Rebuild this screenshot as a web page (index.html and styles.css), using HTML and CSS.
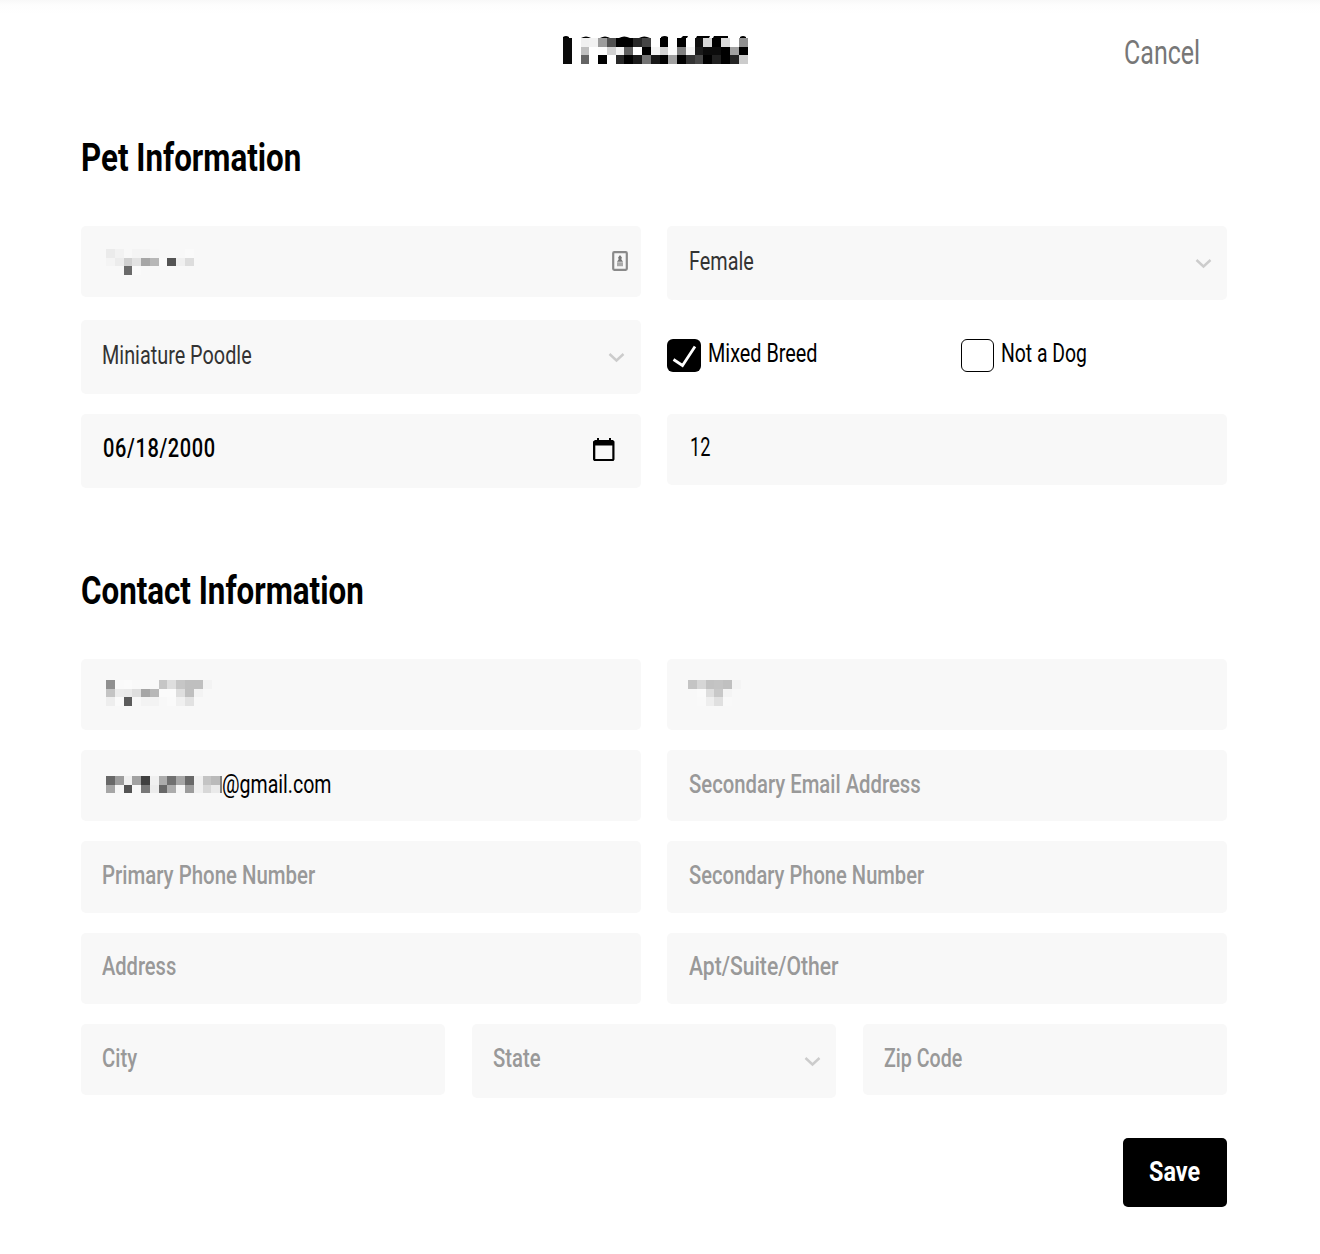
FILE: index.html
```html
<!DOCTYPE html>
<html lang="en">
<head>
  <meta charset="utf-8">
  <title>Edit Pet</title>
  <link rel="stylesheet" href="styles.css">
</head>
<body>

<header class="top">
  <svg class="mask" data-mask="id" width="186" height="28">
    <path d="M0 2V1q3-2 6 0v1zM18 2q5-3 10 0zM37 2q5-3 10 0zM56 2q5-3 11 0zM76 2q5-3 11 0zM98 2V1q4-2 7 0v1zM118 2l2-2h5l-1 2zM133 2l1-2h13l-1 2zM150 2l1-2h14v2zM177 2V1q3-2 6 0v1z"/>
  </svg>
  <a class="cancel"><span class="t t-cancel">Cancel</span></a>
</header>

<main class="form">
  <h2 class="title"><span class="t t-title">Pet Information</span></h2>
  <section class="grid pet">
    <div class="field">
      <svg class="mask mask-pet" data-mask="pet" width="89" height="26"></svg>
      <svg class="contact-icon" width="16" height="20" viewBox="0 0 16 20">
        <rect x="1.2" y="1.2" width="13.6" height="17.6" rx="1" fill="#f8f8f8" stroke="#8a8a8a" stroke-width="2.2"/>
        <path d="M8 4l1.9 2.4-.6 1.8 1.7 2.6H5l1.7-2.6-.6-1.8z" fill="#777"/>
        <path d="M5 12.2h6M5 14.2h6" stroke="#aaa" stroke-width="2"/>
      </svg>
    </div>
    <div class="field select right">
      <span class="t t-narrow">Female</span>
      <svg class="chevron" width="17" height="11"><path d="M1.5 2l7 6.5 7-6.5"/></svg>
    </div>
    <div class="field select breed">
      <span class="t t-narrow">Miniature Poodle</span>
      <svg class="chevron" width="17" height="11"><path d="M1.5 2l7 6.5 7-6.5"/></svg>
    </div>
    <div class="checks">
      <label class="check">
        <span class="box checked"><svg width="34" height="33"><path d="M6.5 20.5l9 6L28 7.5" fill="none" stroke="#fff" stroke-width="2.8"/></svg></span>
        <span class="t t-narrow">Mixed Breed</span>
      </label>
      <label class="check">
        <span class="box"></span>
        <span class="t t-notdog">Not a Dog</span>
      </label>
    </div>
    <div class="field select date">
      <span class="t t-date">06/18/2000</span>
      <svg class="calendar" width="22" height="24" viewBox="0 0 22 24">
        <path d="M4 0h2v3H4zM16 0h2v3h-2zM2 2h18l1.500 1.500v18l-1 1.500H1l-1-1.500V3.500z"/>
        <path d="M2.300 7.500h17v13.500h-17z" fill="#f8f8f8"/>
      </svg>
    </div>
    <div class="field weight right"><span class="t t-weight">12</span></div>
  </section>

  <h2 class="title contact-title"><span class="t t-title">Contact Information</span></h2>
  <section class="grid contact">
    <div class="field"><svg class="mask" data-mask="first" width="106" height="26"></svg></div>
    <div class="field"><svg class="mask mask-last" data-mask="last" width="53" height="26"></svg></div>
    <div class="field email">
      <svg class="mask" data-mask="email" width="116" height="17"></svg>
      <span class="t t-email">@gmail.com</span>
    </div>
    <div class="field empty right"><span class="t">Secondary Email Address</span></div>
    <div class="field empty"><span class="t t-phone">Primary Phone Number</span></div>
    <div class="field empty right"><span class="t t-phone2">Secondary Phone Number</span></div>
    <div class="field empty raised"><span class="t t-address">Address</span></div>
    <div class="field empty raised right"><span class="t t-apt">Apt/Suite/Other</span></div>
  </section>
  <section class="grid thirds">
    <div class="field empty"><span class="t">City</span></div>
    <div class="field select empty">
      <span class="t">State</span>
      <svg class="chevron" width="17" height="11"><path d="M1.5 2l7 6.5 7-6.5"/></svg>
    </div>
    <div class="field empty"><span class="t t-zip">Zip Code</span></div>
  </section>

  <div class="actions">
    <button class="save"><span class="t t-save">Save</span></button>
  </div>
</main>

<script src="script.js"></script>
</body>
</html>
```
FILE: styles.css
```css
body {
  margin: 0;
  height: 1254px;
  background: linear-gradient(#f8f8f8, #fdfdfd 5px, #fff 14px) no-repeat #fff;
  background-size: 100% 14px;
  color: #000;
  font-family: Roboto, sans-serif;
  font-size: 26px;
}

.top {
  display: flex;
  justify-content: space-between;
  height: 106px;
  padding: 36px 120px 0 563px;
  box-sizing: border-box;
}

.cancel {
  width: 76px;
  margin-top: -2px;
  font-size: 32.5px;
  line-height: 38px;
  color: #777;
}

.form {
  padding: 29px 93px 0 81px;
}

/* condensed lettering */
.t {
  display: inline-block;
  white-space: nowrap;
  transform-origin: 0 50%;
  transform: scaleX(0.78);
}

.t-cancel {
  transform: scaleX(0.77);
}

.t-title {
  transform: scaleX(0.813);
}

.t-narrow {
  transform: scaleX(0.763);
}

.t-notdog {
  transform: scaleX(0.745);
}

.t-date {
  letter-spacing: 0.8px;
  transform: scaleX(0.77);
}

.t-weight {
  transform: scaleX(0.7);
}

.t-email {
  transform: scaleX(0.752);
}

.t-phone {
  transform: scaleX(0.785);
}

.t-phone2 {
  transform: scaleX(0.774);
}

.t-address {
  transform: scaleX(0.772);
}

.t-apt {
  transform: scaleX(0.812);
}

.t-zip {
  transform: scaleX(0.755);
}

.t-save {
  transform: scaleX(0.835);
}

.title {
  margin: 0 0 46px;
  height: 45px;
  font-size: 38.5px;
  line-height: 45px;
  font-weight: 700;
}

.contact-title {
  margin-top: 80px;
  margin-bottom: 46px;
}

.grid {
  display: grid;
  grid-template-columns: 560px 560px;
  column-gap: 26px;
  row-gap: 20px;
  align-items: start;
}

.field {
  display: flex;
  align-items: center;
  justify-content: space-between;
  box-sizing: border-box;
  height: 71.2px;
  padding: 0 13px 3px 21px;
  border-radius: 5px;
  background: #f8f8f8;
}

.select {
  height: 74px;
  padding-right: 15px;
  padding-bottom: 5px;
  color: #333;
}

.breed {
  padding-right: 16px;
}

.right {
  padding-left: 22px;
}

.date {
  padding: 0 26px 7px 22px;
  color: #000;
  font-weight: 500;
}

.weight {
  padding-left: 23px;
  padding-bottom: 5px;
}

.empty {
  color: #999;
  font-weight: 500;
}

.raised {
  padding-bottom: 5px;
}

.email {
  justify-content: flex-start;
}

.thirds {
  grid-template-columns: repeat(3, 364px);
  column-gap: 27px;
  margin-top: 20px;
}

.mask {
  display: block;
  margin-left: 4px;
}

.mask rect {
  shape-rendering: crispEdges;
}

.top .mask,
.mask-last {
  margin-left: 0;
}

.mask-pet {
  margin-top: 4px;
}

.contact-icon {
  margin-top: 2px;
}

.chevron {
  margin-top: 6px;
  fill: none;
  stroke: #ccc;
  stroke-width: 2.4;
}

.calendar {
  margin-top: 4px;
}

.checks {
  display: grid;
  grid-template-columns: 294px 266px;
  padding-top: 19px;
}

.check {
  display: flex;
  gap: 7px;
  height: 33px;
  line-height: 29px;
}

.box {
  box-sizing: border-box;
  flex: none;
  width: 33px;
  height: 33px;
  border: 1.5px solid #000;
  border-radius: 6px;
}

.checked {
  width: 34px;
  border: 0;
  background: #000;
}

.actions {
  display: flex;
  justify-content: flex-end;
  margin-top: 40px;
}

.save {
  width: 104px;
  height: 69px;
  padding: 0 0 2px 26px;
  border: 0;
  border-radius: 5px;
  background: #000;
  color: #fff;
  font: 700 28px Roboto, sans-serif;
  text-align: left;
}
```
FILE: script.js
```js
// grey levels of the blocks that hide private values, one string per row
var masks = {
  id: [
    "0a ff f0 f2 9c 50 00 00 28 45 ff 00 ff 00 ff 10 d8 00 dc ff 90",
    "0a ff c0 ff fc d0 f2 60 ff 00 f5 d2 fd 80 f4 1a 0c 0c 00 a0 00",
    "0a ff 64 ff 00 ff 28 00 1a 74 18 00 a0 00 34 48 00 20 00 24 cc"
  ],
  pet: [
    "eb f2 f8 f4 f4 f7 f8 f8 f8 fa",
    "f4 ec d0 e2 a6 b7 fa 54 f0 dd",
    "f8 f8 6a fa f8 f8 f8 f8 f8 f8"
  ],
  first: [
    "90 fa fb f9 f9 f9 c6 de c6 bf bf f3",
    "c4 ec ea de a6 b8 fb fb de bf f3 f8",
    "ee fa 5c f8 f3 f3 f8 fa f0 e2 f8 f8"
  ],
  last: [
    "c4 d6 c2 c4 c0 f4",
    "f8 fa de c8 f4 f8",
    "f8 f9 ee e0 f9 f8"
  ],
  email: [
    "68 9c f0 a2 40 f0 ac 70 a6 68 f0 c4 ba 80",
    "a6 f6 54 f8 78 ec 68 ac f5 9c f0 d8 ea 80"
  ]
};

document.querySelectorAll(".mask").forEach(function(svg) {
  var name = svg.dataset.mask;
  var top = name === "id" ? 2 : 0;
  masks[name].forEach(function(row, y) {
    row.split(" ").forEach(function(g, x) {
      var r = document.createElementNS("http://www.w3.org/2000/svg", "rect");
      r.setAttribute("x", Math.round(x * 8.78));
      r.setAttribute("y", top + Math.round(y * 8.67));
      r.setAttribute("width", 9);
      r.setAttribute("height", Math.round((y + 1) * 8.67) - Math.round(y * 8.67));
      r.setAttribute("fill", "#" + g + g + g);
      svg.appendChild(r);
    });
  });
});
```
